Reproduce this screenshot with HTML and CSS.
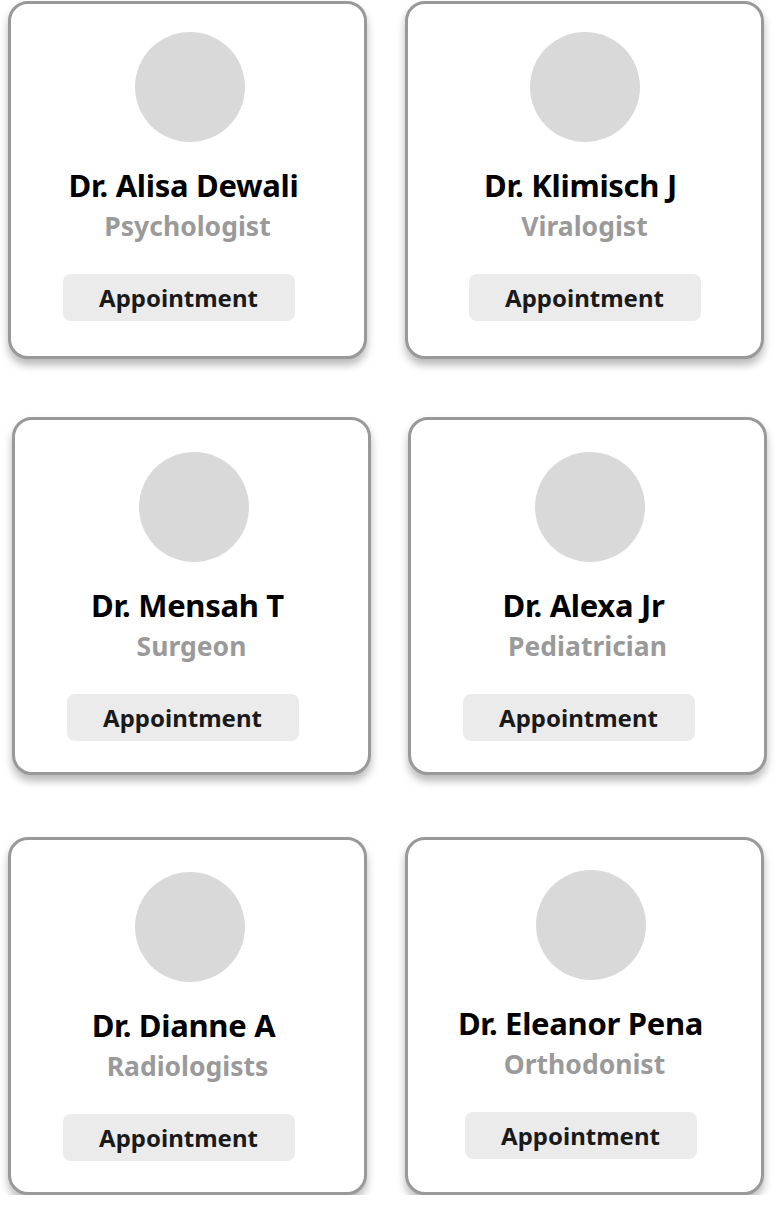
FILE: index.html
```html
<!DOCTYPE html>
<html lang="en">
<head>
<meta charset="utf-8">
<title>Doctors</title>
<link rel="stylesheet" href="styles.css">
</head>
<body>
<main class="grid">
  <article class="card card-r1">
    <div class="avatar"></div>
    <h2 class="name">Dr. Alisa Dewali</h2>
    <p class="role">Psychologist</p>
    <button class="btn btn-left">Appointment</button>
  </article>
  <article class="card card-r1">
    <div class="avatar avatar-l"></div>
    <h2 class="name">Dr. Klimisch J</h2>
    <p class="role">Viralogist</p>
    <button class="btn">Appointment</button>
  </article>
  <article class="card card-r2a">
    <div class="avatar"></div>
    <h2 class="name">Dr. Mensah T</h2>
    <p class="role">Surgeon</p>
    <button class="btn btn-left">Appointment</button>
  </article>
  <article class="card card-r2b">
    <div class="avatar"></div>
    <h2 class="name">Dr. Alexa Jr</h2>
    <p class="role">Pediatrician</p>
    <button class="btn btn-left">Appointment</button>
  </article>
  <article class="card card-r3">
    <div class="avatar"></div>
    <h2 class="name">Dr. Dianne A</h2>
    <p class="role">Radiologists</p>
    <button class="btn btn-left">Appointment</button>
  </article>
  <article class="card card-r3 card-up">
    <div class="avatar avatar-r"></div>
    <h2 class="name">Dr. Eleanor Pena</h2>
    <p class="role">Orthodonist</p>
    <button class="btn btn-left-sm">Appointment</button>
  </article>
</main>
</body>
</html>
```

FILE: styles.css
```css
* { box-sizing: border-box; }

html, body {
  margin: 0;
  padding: 0;
  background: #ffffff;
  font-family: "Noto Sans", "Open Sans", sans-serif;
}

.grid {
  display: grid;
  grid-template-columns: 359px 359px;
  column-gap: 38px;
  row-gap: 58px;
  padding: 1px 0 0 8px;
}

.card {
  width: 359px;
  height: 358px;
  border: 3px solid #999999;
  border-radius: 20px;
  background: #ffffff;
  box-shadow: 0 6px 8px rgba(0, 0, 0, 0.28);
  display: flex;
  flex-direction: column;
  align-items: center;
  padding-top: 32px;
}

.card-r1 { padding-top: 28px; }
.card-r2a { margin-left: 4px; }
.card-r2b { margin-left: 3px; }
.card-r3 { margin-top: 4px; }
.card-up { padding-top: 30px; }

.avatar {
  width: 110px;
  height: 110px;
  border-radius: 50%;
  background: #d9d9d9;
  flex: none;
  margin-left: 4px;
}

.avatar-l { margin-left: 0; }
.avatar-r { margin-left: 12px; }

.name {
  margin: 23px 8px 0 0;
  font-size: 31px;
  font-weight: 700;
  line-height: 40px;
  color: #000000;
  letter-spacing: -0.3px;
}

.role {
  margin: 2px 0 0 0;
  font-size: 26.5px;
  font-weight: 700;
  line-height: 38px;
  color: #9a9a9a;
}

.btn {
  margin-top: 29px;
  width: 232px;
  height: 47px;
  border: none;
  border-radius: 8px;
  background: #ebebeb;
  color: #1a1a1a;
  font-family: inherit;
  font-size: 24px;
  font-weight: 700;
  padding: 0;
}

.btn-left { margin-right: 18px; }
.btn-left-sm { margin-right: 8px; }
```
